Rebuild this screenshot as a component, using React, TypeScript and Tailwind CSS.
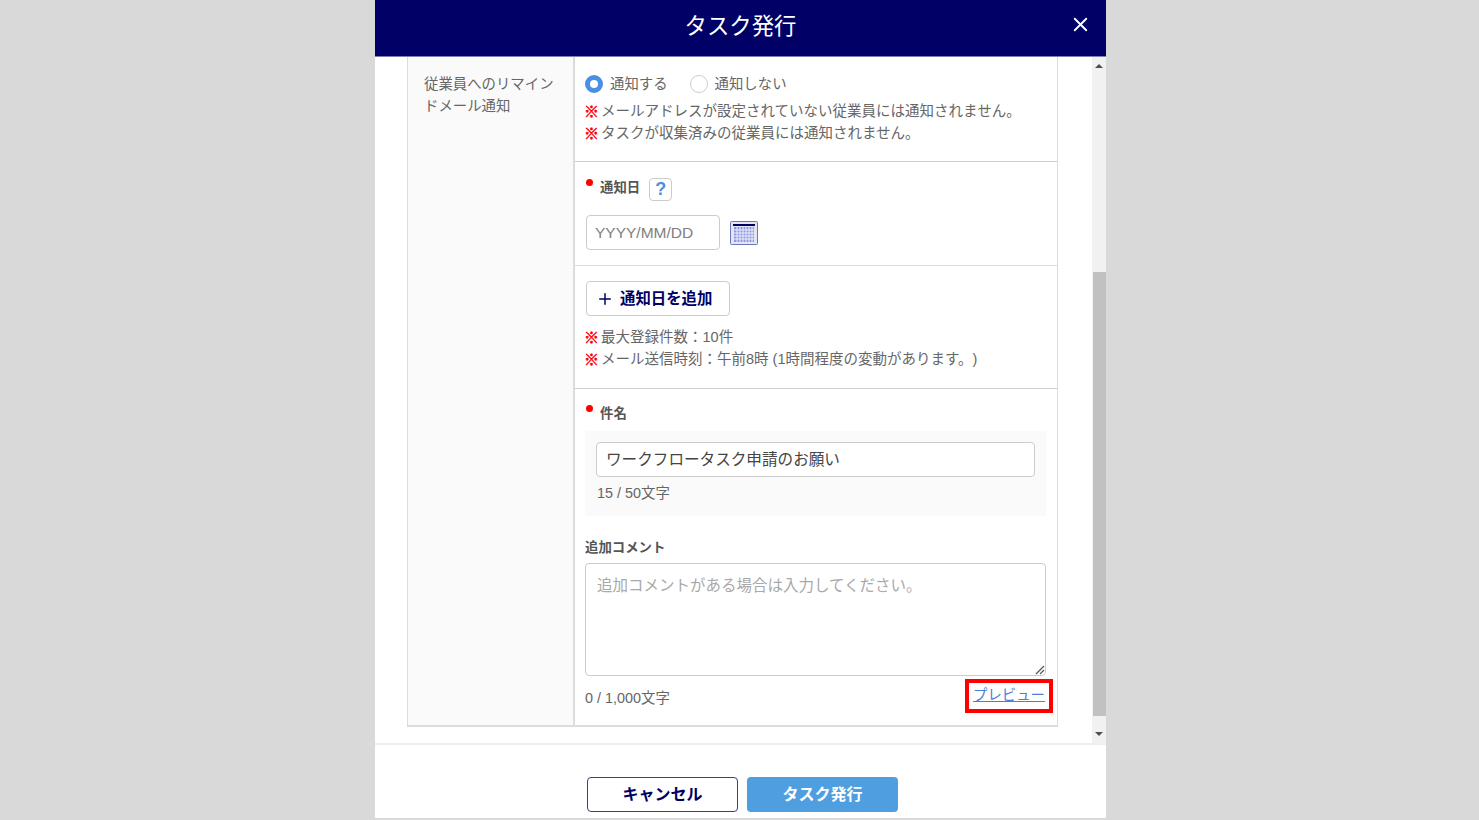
import { X, Plus } from 'lucide-react'

const font = { fontFamily: '"Liberation Sans", "Noto Sans CJK JP", sans-serif' }

function Note({ children }: { children: React.ReactNode }) {
  return (
    <p className="-ml-px flex h-[22px] items-center whitespace-nowrap text-[14.5px] text-[#666] [text-spacing-trim:space-all]">
      <span className="-ml-px w-[17px] pb-[2px] text-[15px] leading-none font-black text-[#f00] [-webkit-text-stroke:0.5px_#f00]">※</span>
      {children}
    </p>
  )
}

function RequiredLabel({ children }: { children: React.ReactNode }) {
  return (
    <div className="flex items-start">
      <span className="mt-[1px] h-[7px] w-[7px] rounded-full bg-[#f00]" />
      <span className="ml-[7px] text-[13.4px] leading-5 font-bold text-[#555]">{children}</span>
    </div>
  )
}

function CalendarIcon() {
  return (
    <svg width="28" height="24" viewBox="0 0 28 24">
      <rect x="0.5" y="0.5" width="27" height="23" rx="1" fill="#e3e5f3" stroke="#7076b4" />
      <rect x="3" y="3" width="22" height="2" fill="#000066" />
      <rect x="4" y="6" width="20" height="15" fill="#8f94e0" />
      <path d="M7 6v15M10 6v15M13 6v15M16 6v15M19 6v15M22 6v15M4 9h20M4 12h20M4 15h20M4 18h20" stroke="#eef0fb" strokeWidth="1" />
    </svg>
  )
}

export default function App() {
  return (
    <div className="flex h-[820px] justify-center bg-[#d9d9d9] pl-[2px] text-[#666]" style={font}>
      <div className="flex h-[818px] w-[731px] flex-col bg-white">
        <header className="relative flex h-[57px] shrink-0 items-center justify-center border-b border-[#7f7fb3] bg-[#000066]">
          <h1 className="mt-[-2px] text-[22.4px] text-white">タスク発行</h1>
          <X size={23} strokeWidth={2} className="absolute top-[13px] right-[14px] text-white" />
        </header>

        <div className="flex h-[686px] shrink-0">
          <div className="min-w-0 flex-1 pl-8">
            <div className="flex h-[670px] w-[651px] border-x border-b-2 border-[#dcdcdc]">
              <div className="w-[167px] shrink-0 border-r-2 border-[#dcdcdc] bg-[#fafafa] pt-4 pl-[16px] text-[14.4px] leading-[22px]">
                <p className="w-[134px]">従業員へのリマインドメール通知</p>
              </div>

              <div className="min-w-0 flex-1">
                <section className="h-[105px] border-b border-[#cfcfcf] pt-[16px] pl-[11px]">
                  <div className="flex h-[22px] items-center text-[14.4px]">
                    <span className="-ml-px h-[18px] w-[18px] rounded-full border-[5px] border-[#4a90e2] bg-white" />
                    <span className="mt-[1px] ml-[7px]">通知する</span>
                    <span className="ml-[22px] h-[18px] w-[18px] rounded-full border border-[#ccc] bg-white" />
                    <span className="mt-[1px] ml-[7px]">通知しない</span>
                  </div>
                  <div className="mt-[6px]">
                    <Note>メールアドレスが設定されていない従業員には通知されません。</Note>
                    <Note>タスクが収集済みの従業員には通知されません。</Note>
                  </div>
                </section>

                <section className="h-[104px] border-b border-[#dcdcdc] pt-[16px] pl-[11px]">
                  <div className="flex items-start">
                    <RequiredLabel>通知日</RequiredLabel>
                    <span className="ml-[9px] flex h-[23px] w-[23px] items-center justify-center rounded-[4px] border border-[#ccc] text-[18px] font-bold text-[#4a90e2]">?</span>
                  </div>
                  <div className="mt-[14px] flex items-center">
                    <div className="flex h-[35px] w-[134px] items-center rounded-[4px] border border-[#ccc] pl-[8px] text-[15.5px] text-[#808080]">YYYY/MM/DD</div>
                    <span className="ml-[10px] flex"><CalendarIcon /></span>
                  </div>
                </section>

                <section className="h-[123px] border-b border-[#cfcfcf] pt-[15px] pl-[11px]">
                  <button className="flex h-[35px] w-[144px] items-center rounded-[4px] border border-[#ccc] bg-white pl-[9px] text-[15.4px] font-bold text-[#000066]">
                    <Plus size={18} strokeWidth={2} />
                    <span className="ml-[6px]">通知日を追加</span>
                  </button>
                  <div className="mt-[11px]">
                    <Note>最大登録件数：10件</Note>
                    <Note>メール送信時刻：午前8時 (1時間程度の変動があります。)</Note>
                  </div>
                </section>

                <section className="relative pt-[15px] pl-[11px]">
                  <RequiredLabel>件名</RequiredLabel>
                  <div className="mt-[7px] -ml-px h-[85px] w-[461px] bg-[#fafafa] pt-[11px] pl-[11px]">
                    <div className="flex h-[35px] w-[439px] items-center rounded-[4px] border border-[#ccc] bg-white pl-[9px] text-[15.6px] text-[#444]">ワークフロータスク申請のお願い</div>
                    <p className="mt-[5px] ml-px text-[14.4px] leading-[22px]">15 / 50文字</p>
                  </div>
                  <p className="mt-[22px] -ml-px text-[13.4px] leading-5 font-bold text-[#555]">追加コメント</p>
                  <div className="relative mt-[5px] -ml-px h-[113px] w-[461px] rounded-[4px] border border-[#ccc] pt-[12px] pl-[11px] text-[15.5px] leading-5 text-[#a9a9a9]">
                    追加コメントがある場合は入力してください。
                    <svg className="absolute right-0 bottom-0" width="11" height="11" viewBox="0 0 11 11">
                      <path d="M2 10 10 2M6 10 10 6" stroke="#555" strokeWidth="1.2" />
                    </svg>
                  </div>
                  <div className="mt-[3px] -ml-px flex h-[34px] w-[468px] items-start justify-between">
                    <p className="mt-[8px] text-[14.4px] leading-[22px]">0 / 1,000文字</p>
                    <a className="flex h-[34px] w-[88px] items-center justify-center border-[4px] border-[#f00] text-[14.4px] text-[#4a7fd8] underline">プレビュー</a>
                  </div>
                </section>
              </div>
            </div>
          </div>

          <div className="flex w-[14px] shrink-0 flex-col bg-[#f1f1f1]">
            <div className="flex h-[17px] shrink-0 items-center justify-center">
              <span className="h-0 w-0 border-x-[4px] border-b-[4px] border-x-transparent border-b-[#505050]" />
            </div>
            <div className="mt-[198px] ml-px h-[444px] shrink-0 bg-[#c1c1c1]" />
            <div className="flex flex-1 items-center justify-center pt-2">
              <span className="h-0 w-0 border-x-[4px] border-t-[4px] border-x-transparent border-t-[#505050]" />
            </div>
          </div>
        </div>

        <footer className="flex min-h-0 flex-1 justify-center gap-[9px] border-t-2 border-[#efefef] pt-[32px] pl-[4px]">
          <button className="h-[35px] w-[151px] rounded-[4px] border border-[#3c3c8c] bg-white text-[16px] font-bold text-[#000066]">キャンセル</button>
          <button className="h-[35px] w-[151px] rounded-[4px] bg-[#4f9fe0] text-[16px] font-bold text-white">タスク発行</button>
        </footer>
      </div>
    </div>
  )
}
